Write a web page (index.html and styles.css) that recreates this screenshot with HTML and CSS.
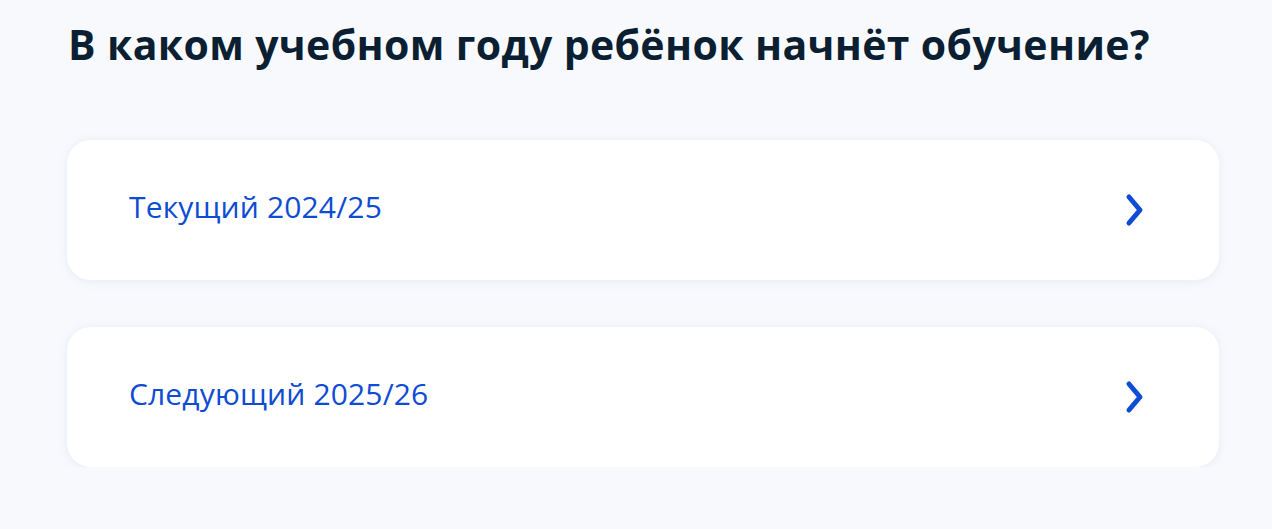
FILE: index.html
```html
<!DOCTYPE html>
<html lang="ru">
<head>
<meta charset="utf-8">
<link rel="stylesheet" href="styles.css">
</head>
<body>
<main class="page">
  <h1 class="title">В каком учебном году ребёнок начнёт обучение?</h1>
  <div class="options">
    <a class="option" href="#">
      <span class="option-text">Текущий 2024/25</span>
      <svg class="chevron" width="20" height="34" viewBox="0 0 20 34"><path d="M4 4 L15 17 L4 30" fill="none" stroke="#0d4cd3" stroke-width="5" stroke-linecap="round" stroke-linejoin="round"/></svg>
    </a>
    <a class="option" href="#">
      <span class="option-text">Следующий 2025/26</span>
      <svg class="chevron" width="20" height="34" viewBox="0 0 20 34"><path d="M4 4 L15 17 L4 30" fill="none" stroke="#0d4cd3" stroke-width="5" stroke-linecap="round" stroke-linejoin="round"/></svg>
    </a>
  </div>
</main>
</body>
</html>
```
FILE: styles.css
```css
html, body {
  margin: 0;
  padding: 0;
  background: #f8f9fd;
}
body {
  font-family: "Open Sans", "Noto Sans", sans-serif;
}
.page {
  padding: 16px 53px 0 67px;
}
.title {
  margin: 0;
  font-size: 41px;
  line-height: 56px;
  font-weight: 700;
  letter-spacing: 0.35px;
  color: #0b1f33;
  padding-left: 1px;
  white-space: nowrap;
}
.options {
  margin-top: 68px;
  display: flex;
  flex-direction: column;
  gap: 47px;
}
.option {
  display: flex;
  align-items: center;
  justify-content: space-between;
  height: 140px;
  box-sizing: border-box;
  padding: 0 74px 0 62px;
  background: #ffffff;
  border-radius: 24px;
  box-shadow: 0 1px 8px rgba(180, 195, 225, 0.25);
  text-decoration: none;
}
.option-text {
  font-size: 30px;
  line-height: 40px;
  letter-spacing: 0.15px;
  color: #0d4cd3;
  margin-top: -6px;
}
.chevron {
  display: block;
}
```
